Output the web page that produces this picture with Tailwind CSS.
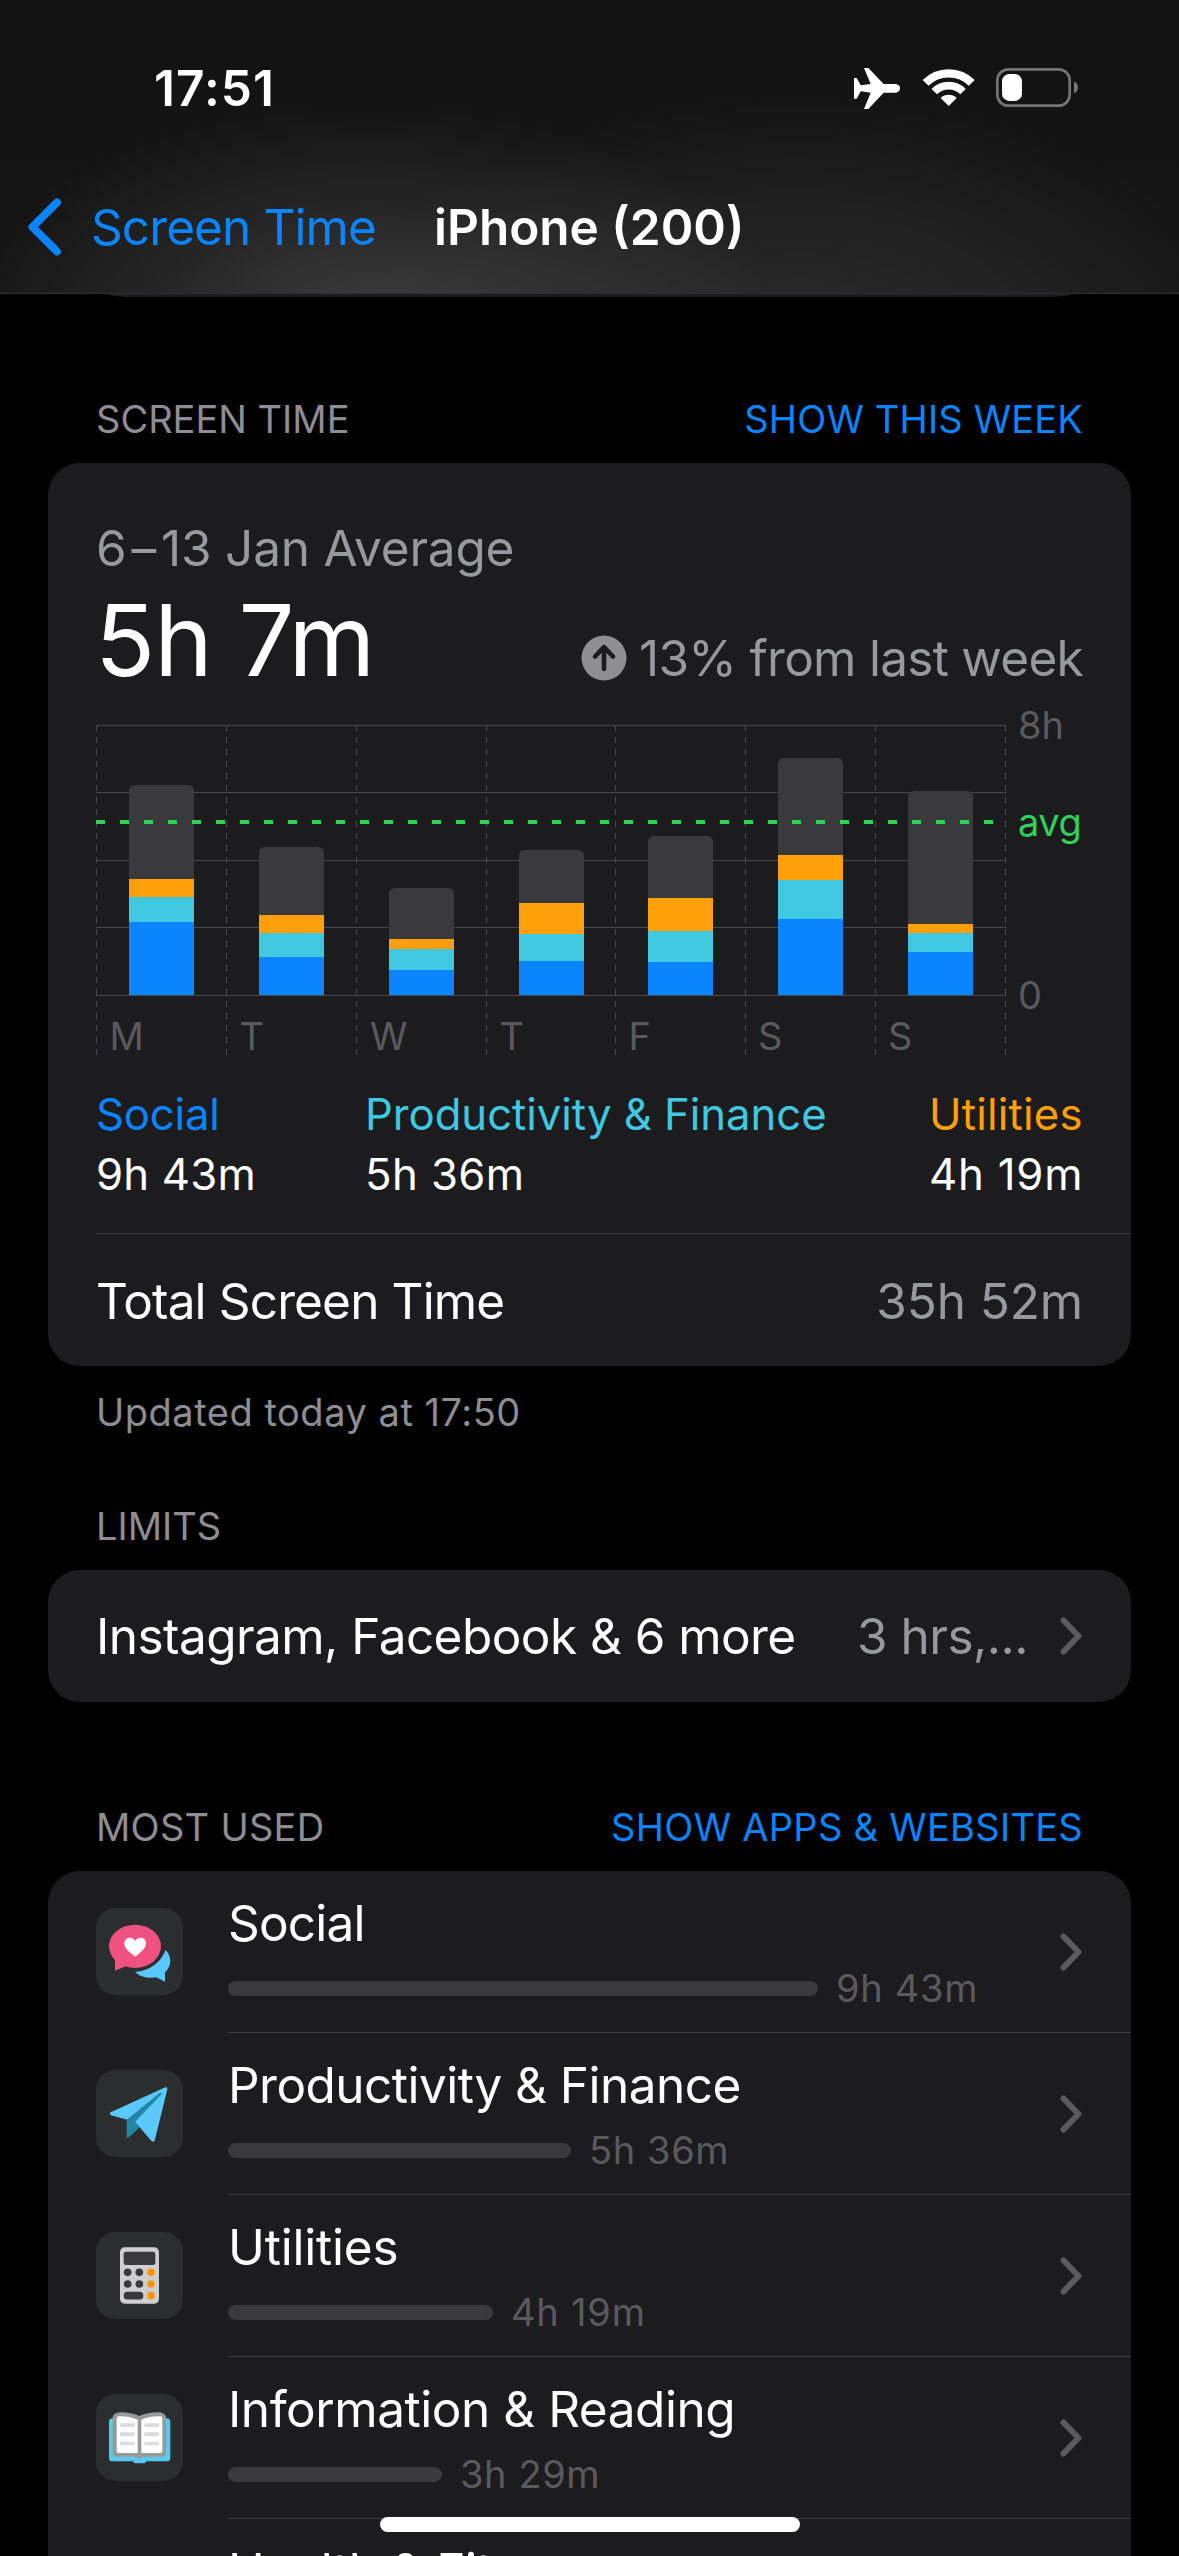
<!DOCTYPE html>
<html lang="en">
<head>
<meta charset="utf-8">
<title>Screen Time</title>
<script src="https://cdn.jsdelivr.net/npm/@tailwindcss/browser@4"></script>
</head>
<body class="bg-black">
<div class="relative w-[1179px] h-[2556px] overflow-hidden bg-black text-white font-['Inter',sans-serif] whitespace-nowrap">

  <!-- Status bar and navigation -->
  <header class="h-[294px] border-b border-[#303032] bg-[radial-gradient(ellipse_400px_210px_at_370px_310px,rgba(255,255,255,0.16),rgba(255,255,255,0.07)_50%,transparent),radial-gradient(ellipse_440px_250px_at_800px_340px,rgba(255,255,255,0.09),rgba(255,255,255,0.05)_50%,transparent),linear-gradient(#121212,#161617)]">
    <div class="flex items-start justify-between pt-[58px] pl-[154px] pr-[100px]">
      <div class="text-[49.5px] leading-[60px] font-semibold tracking-[1.1px]">17:51</div>
      <svg class="mt-2" width="225" height="45" viewBox="72 48 675 135">
        <path fill="#fff" d="M102 54h13l46 48h37q12 3 12 13t-12 13h-37l-46 49h-13l20-49-30-4-12 22h-8V84h8l12 22 30-4z"/>
        <path fill="none" stroke="#fff" stroke-width="25" d="M286.7 98.7a98 98 0 0 1 138.6 0"/>
        <path fill="none" stroke="#fff" stroke-width="23" d="M312.9 124.9a61 61 0 0 1 86.2 0"/>
        <path fill="#fff" d="M356 168l-24-24a34 34 0 0 1 48 0z"/>
        <rect x="502" y="58" width="217" height="109" rx="33" fill="none" stroke="#757575" stroke-width="8"/>
        <rect x="516" y="72" width="60" height="81" rx="22" fill="#fff"/>
        <path fill="#757575" d="M732 94q12 6 12 18t-12 18z"/>
      </svg>
    </div>
    <div class="flex items-center h-[60px] mt-[79px] pl-7 text-[49.5px] leading-[60px]">
      <svg width="34" height="58" viewBox="0 0 34 58"><path d="M29 4.500L4.500 29 29 53.500" fill="none" stroke="#0a84ff" stroke-width="8" stroke-linecap="round" stroke-linejoin="round"/></svg>
      <span class="ml-[29px] w-[343px] text-[#0a84ff] tracking-[-0.9px]">Screen Time</span>
      <span class="font-semibold">iPhone (200)</span>
    </div>
  </header>
  <div class="mx-auto w-[963px] h-[3px] bg-[#1c1c1e] [border-radius:0_0_24px_24px/0_0_3px_3px]"></div>

  <!-- Screen time -->
  <div class="flex justify-between mt-[98px] pl-24 pr-24 text-[38px] leading-[48px]">
    <h2 class="text-[#8d8d93]">SCREEN TIME</h2>
    <a class="text-[#0a84ff] tracking-[0.16px]">SHOW THIS WEEK</a>
  </div>
  <section class="mx-12 mt-5 h-[903px] rounded-[32px] bg-[#1c1c1e] pt-[55px] pl-12">
    <div class="text-[49.5px] leading-[60px] tracking-[-0.2px] text-[#98989f]">6<span class="mx-[5px]">–</span>13 Jan Average</div>
    <div class="mt-[2px] flex items-end justify-between pr-[48px]">
      <div class="-ml-px text-[99px] leading-[120px] tracking-[-1px]">5h 7m</div>
      <div class="mb-3 flex items-center text-[49.5px] leading-[60px] tracking-[-0.72px] text-[#98989f]">
        <svg class="mr-3" width="46" height="46" viewBox="0 0 46 46"><circle cx="23" cy="23" r="22.500" fill="#8e8e93"/><path d="M23 34V13M14 21.500L23 12.200 32 21.500" fill="none" stroke="#1c1c1e" stroke-width="4.600" stroke-linecap="round" stroke-linejoin="round"/></svg>
        13% from last week
      </div>
    </div>
    <svg class="block" width="1035" height="360" viewBox="96 700 1035 360" font-size="38" font-family="Inter, sans-serif">
      <g fill="#48484a">
        <path d="M96 725h910v1H96zM96 792h910v1H96zM96 860h910v1H96zM96 927h910v1H96zM96 995h910v1H96z"/>
      </g>
      <path fill="none" stroke="#48484a" stroke-dasharray="6 6" d="M96.500 725v331M226.500 725v331M356.500 725v331M486.500 725v331M615.500 725v331M745.500 725v331M875.500 725v331M1005.500 725v331"/>
      <g id="bars"></g>
      <path stroke="#30d158" stroke-width="4" stroke-dasharray="9 15" d="M96 822h908"/>
      <g fill="#5a5a5e">
        <text x="1018" y="739">8h</text>
        <text x="1018" y="1009">0</text>
        <text x="109.500" y="1050">M</text>
        <text x="239.500" y="1050">T</text>
        <text x="370" y="1050">W</text>
        <text x="499.500" y="1050">T</text>
        <text x="628.500" y="1050">F</text>
        <text x="758" y="1050">S</text>
        <text x="888" y="1050">S</text>
      </g>
      <text x="1018" y="836" fill="#30d158" letter-spacing="-0.500">avg</text>
    </svg>
    <div class="mt-[25px] grid grid-cols-[269px_564px_1fr] text-[43.7px] leading-[60px]">
      <div><div class="text-[#0a84ff] tracking-[-0.2px]">Social</div><div class="tracking-[0.2px]">9h 43m</div></div>
      <div><div class="text-[#40c8e0] tracking-[-0.05px]">Productivity &amp; Finance</div><div class="tracking-[0.4px]">5h 36m</div></div>
      <div><div class="text-[#ff9f0a] tracking-[0.2px]">Utilities</div><div class="tracking-[0.8px]">4h 19m</div></div>
    </div>
    <div class="mt-[28px] border-t border-[#3d3d40] flex justify-between pt-[37px] pr-[48px] text-[49.5px] leading-[60px]">
      <span class="tracking-[-0.85px]">Total Screen Time</span>
      <span class="text-[#98989f] tracking-[-0.1px]">35h 52m</span>
    </div>
  </section>
  <p class="mt-[22px] pl-24 text-[38px] leading-[48px] tracking-[0.52px] text-[#8d8d93]">Updated today at 17:50</p>

  <!-- Limits -->
  <h2 class="mt-[66px] pl-24 text-[38px] leading-[48px] text-[#8d8d93]">LIMITS</h2>
  <section class="mx-12 mt-5 h-[132px] rounded-[32px] bg-[#1c1c1e] flex items-center pl-12 pr-[49px] text-[49.5px] leading-[60px]">
    <span class="w-[761px] tracking-[-0.55px]">Instagram, Facebook &amp; 6 more</span>
    <span class="w-[203px] tracking-[-0.5px] text-[#98989f]">3 hrs,...</span>
    <svg width="22" height="38" viewBox="0 0 22 38"><path d="M3.500 3.500L18.500 19 3.500 34.500" fill="none" stroke="#5a5a5f" stroke-width="6" stroke-linecap="round" stroke-linejoin="round"/></svg>
  </section>

  <!-- Most used -->
  <div class="flex justify-between mt-[101px] pl-24 pr-24 text-[38px] leading-[48px] tracking-[0.28px]">
    <h2 class="text-[#8d8d93]">MOST USED</h2>
    <a class="text-[#0a84ff]">SHOW APPS &amp; WEBSITES</a>
  </div>
  <section class="mx-12 mt-5 rounded-t-[32px] bg-[#1c1c1e]">
    <div class="flex h-[162px] pl-12">
      <svg class="mt-[37px] mr-[45px] shrink-0" width="87" height="87" viewBox="0 0 261 261">
        <rect width="261" height="261" rx="58" fill="#2c2d2f"/>
        <path fill="#5ac8fa" d="M209 126q14 14 14 34-1 20-16 33v28l-26-13q-41 6-64-16 68-7 92-66z"/>
        <ellipse cx="117" cy="115" rx="78" ry="65" fill="#ef5182"/>
        <path fill="#ef5182" d="M57 145v43l34-14z"/>
        <path fill="#fff" d="M117.500 146C100 132 85 122 85 106c0-11 8-17 16-17s14 4 16.500 10c2.500-6 8.500-10 16.500-10s16 6 16 17c0 16-15 26-32.500 40z"/>
      </svg>
      <div class="grow border-b border-[#3d3d40] flex items-center justify-between pr-[49px]">
        <div class="h-[162px] pt-[22px]">
          <div class="text-[49.5px] leading-[60px] tracking-[-0.8px]">Social</div>
          <div class="mt-[11px] h-12 flex items-center gap-[18px]"><div class="mt-px w-[590px] h-[15px] rounded-full bg-[#3a3a3c]"></div><span class="text-[38px] leading-[48px] tracking-[0.7px] text-[#5a5a5e]">9h 43m</span></div>
        </div>
        <svg width="22" height="38" viewBox="0 0 22 38"><path d="M3.500 3.500L18.500 19 3.500 34.500" fill="none" stroke="#5a5a5f" stroke-width="6" stroke-linecap="round" stroke-linejoin="round"/></svg>
      </div>
    </div>
    <div class="flex h-[162px] pl-12">
      <svg class="mt-[37px] mr-[45px] shrink-0" width="87" height="87" viewBox="0 0 261 261">
        <rect width="261" height="261" rx="58" fill="#2c2d2f"/>
        <path fill="#5ac8fa" d="M208 52L44 127q-5 5 1 9l49 13 23 7 49 56q6 6 10 0l38-154q1-8-6-6z"/>
        <path fill="#2286a5" d="M92 149v53q3 4 6 0l32-29-13-17 80-84q1-5-6-3z"/>
      </svg>
      <div class="grow border-b border-[#3d3d40] flex items-center justify-between pr-[49px]">
        <div class="h-[162px] pt-[22px]">
          <div class="text-[49.5px] leading-[60px] tracking-[-0.52px]">Productivity &amp; Finance</div>
          <div class="mt-[11px] h-12 flex items-center gap-[18px]"><div class="mt-px w-[343px] h-[15px] rounded-full bg-[#3a3a3c]"></div><span class="text-[38px] leading-[48px] tracking-[0.6px] text-[#5a5a5e]">5h 36m</span></div>
        </div>
        <svg width="22" height="38" viewBox="0 0 22 38"><path d="M3.500 3.500L18.500 19 3.500 34.500" fill="none" stroke="#5a5a5f" stroke-width="6" stroke-linecap="round" stroke-linejoin="round"/></svg>
      </div>
    </div>
    <div class="flex h-[162px] pl-12">
      <svg class="mt-[37px] mr-[45px] shrink-0" width="87" height="87" viewBox="0 0 261 261">
        <rect width="261" height="261" rx="58" fill="#2c2d2f"/>
        <rect x="72" y="46" width="117" height="169" rx="14" fill="#cfcfd1"/>
        <rect x="83" y="59" width="95" height="40" rx="7" fill="#3a3a3c"/>
        <g fill="#3a3a3c"><circle cx="95" cy="121" r="11.500"/><circle cx="130" cy="121" r="11.500"/><circle cx="95" cy="156" r="11.500"/><circle cx="130" cy="156" r="11.500"/><rect x="83" y="179.500" width="59" height="23" rx="11.500"/></g>
        <g fill="#ff9500"><circle cx="165" cy="121" r="11.500"/><circle cx="165" cy="156" r="11.500"/><circle cx="165" cy="191" r="11.500"/></g>
      </svg>
      <div class="grow border-b border-[#3d3d40] flex items-center justify-between pr-[49px]">
        <div class="h-[162px] pt-[22px]">
          <div class="text-[49.5px] leading-[60px] tracking-[-0.2px]">Utilities</div>
          <div class="mt-[11px] h-12 flex items-center gap-[18px]"><div class="mt-px w-[265px] h-[15px] rounded-full bg-[#3a3a3c]"></div><span class="text-[38px] leading-[48px] tracking-[0.8px] text-[#5a5a5e]">4h 19m</span></div>
        </div>
        <svg width="22" height="38" viewBox="0 0 22 38"><path d="M3.500 3.500L18.500 19 3.500 34.500" fill="none" stroke="#5a5a5f" stroke-width="6" stroke-linecap="round" stroke-linejoin="round"/></svg>
      </div>
    </div>
    <div class="flex h-[162px] pl-12">
      <svg class="mt-[37px] mr-[45px] shrink-0" width="87" height="87" viewBox="0 0 261 261">
        <rect width="261" height="261" rx="58" fill="#2c2d2f"/>
        <rect x="39" y="73" width="184" height="129" rx="11" fill="#5ac8f0"/>
        <rect x="112" y="194" width="38" height="14" rx="6" fill="#5ac8f0"/>
        <path fill="#999" d="M50 68q5-14 30-13 30 2 50 11 20-9 50-11 25-1 30 13v108q0 12-12 12h-60q-8 12-16 0H62q-12 0-12-12z"/>
        <path fill="#fff" d="M62 73q0-6 6-6 32-1 57 10v100H68q-6 0-6-6zM199 73q0-6-6-6-32-1-57 10v100h57q6 0 6-6z"/>
        <path fill="#dcdcdc" d="M72 88h44v11H72zM72 115h44v12H72zM72 143h44v11H72zM145 88h44v11h-44zM145 115h44v12h-44zM145 143h44v11h-44z"/>
      </svg>
      <div class="grow border-b border-[#3d3d40] flex items-center justify-between pr-[49px]">
        <div class="h-[162px] pt-[22px]">
          <div class="text-[49.5px] leading-[60px] tracking-[-0.45px]">Information &amp; Reading</div>
          <div class="mt-[11px] h-12 flex items-center gap-[18px]"><div class="mt-px w-[214px] h-[15px] rounded-full bg-[#3a3a3c]"></div><span class="text-[38px] leading-[48px] tracking-[0.6px] text-[#5a5a5e]">3h 29m</span></div>
        </div>
        <svg width="22" height="38" viewBox="0 0 22 38"><path d="M3.500 3.500L18.500 19 3.500 34.500" fill="none" stroke="#5a5a5f" stroke-width="6" stroke-linecap="round" stroke-linejoin="round"/></svg>
      </div>
    </div>
    <div class="h-[162px] pl-[180px] pt-[22px] text-[49.5px] leading-[60px] tracking-[-0.4px]">Health &amp; Fitness</div>
  </section>

  <!-- Home indicator -->
  <div class="absolute left-[380px] top-[2517px] w-[420px] h-[15px] rounded-full bg-white"></div>
</div>
<script>
  // Each bar: x, then the y of the tops of other, utilities, productivity and social
  const bars = [[129,785,879,897,922],[259,847,915,933,957],[389,888,939,949,970],[519,850,903,934,961],[648,836,898,931,962],[778,758,855,880,919],[908,791,924,933,952]];
  const fills = ['#ff9f0a', '#40c8e0', '#0a84ff'];
  document.getElementById('bars').innerHTML = bars.map(([x, top, ...y]) =>
    `<path fill="#3a3a3c" d="M${x} 995V${top + 6}q0-6 6-6h53q6 0 6 6V995z"/>` +
    y.map((v, i) => `<rect x="${x}" y="${v}" width="65" height="${995 - v}" fill="${fills[i]}"/>`).join('')
  ).join('');
</script>
</body>
</html>
